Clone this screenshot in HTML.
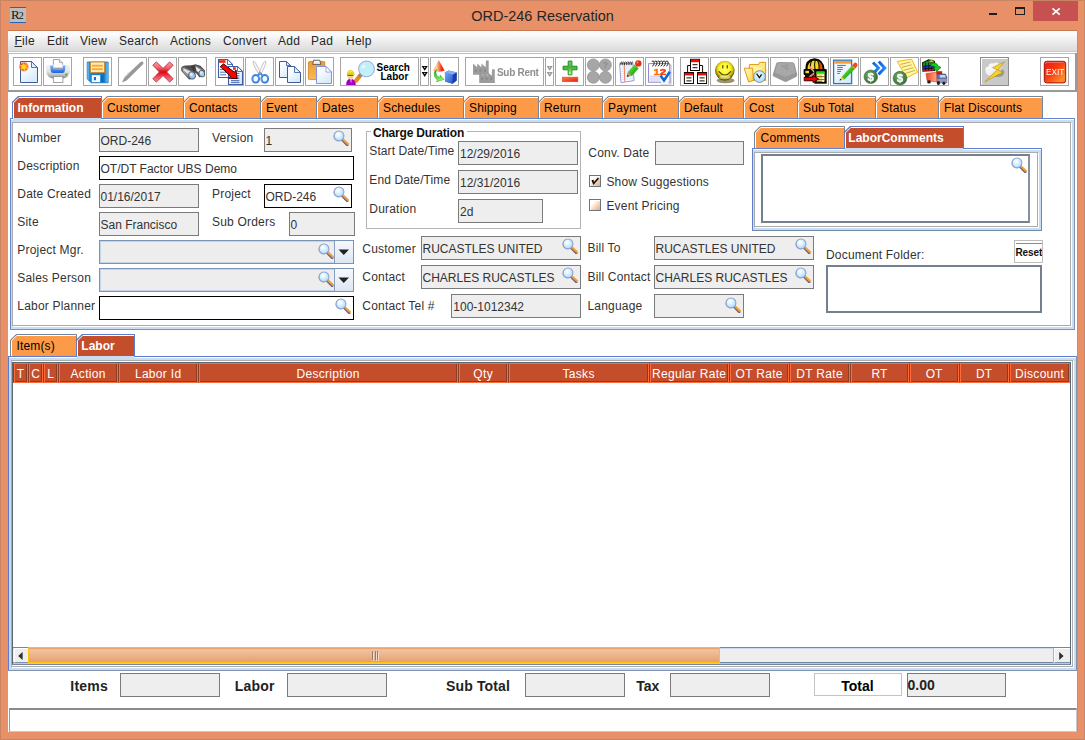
<!DOCTYPE html>
<html><head><meta charset="utf-8"><title>ORD-246 Reservation</title>
<style>
*{box-sizing:border-box;margin:0;padding:0}
html,body{width:1085px;height:740px;overflow:hidden;background:#E89067}
body{position:relative;font-family:"Liberation Sans",sans-serif;font-size:12px;color:#333}
.a{position:absolute;white-space:nowrap}
svg{overflow:visible}
.tb{top:57px;width:29px;height:29px;border:1px solid #A6A6A6;background:#fff}
</style></head><body>
<svg width="0" height="0" style="position:absolute"><defs><symbol id="mag" viewBox="0 0 17 16"><radialGradient id="mg" cx="0.4" cy="0.35" r="0.7"><stop offset="0" stop-color="#fff"/><stop offset="0.35" stop-color="#E4F4FE"/><stop offset="1" stop-color="#A8D8FA"/></radialGradient>
<path d="M9 9.6 L14.2 14.9" stroke="#6A6480" stroke-width="2.6" stroke-linecap="round"/>
<path d="M10.2 9.4 L15 14" stroke="#F4A030" stroke-width="2.1" stroke-linecap="round"/>
<circle cx="5.6" cy="6.4" r="5.1" fill="#4A4A58" opacity="0.45"/>
<circle cx="6" cy="5.9" r="4.9" fill="url(#mg)" stroke="#90A4D4" stroke-width="1.1"/></symbol>
<linearGradient id="gpage" x1="0" y1="0" x2="0.6" y2="1"><stop offset="0" stop-color="#fff"/><stop offset="0.45" stop-color="#F4F9FE"/><stop offset="1" stop-color="#D6EAFA"/></linearGradient>
<radialGradient id="gstar"><stop offset="0" stop-color="#FFE800"/><stop offset="0.35" stop-color="#FFC000"/><stop offset="0.6" stop-color="#F4501C"/><stop offset="1" stop-color="#F4501C" stop-opacity="0"/></radialGradient>
<linearGradient id="gprn" x1="0" y1="0" x2="0" y2="1"><stop offset="0" stop-color="#F2F2F2"/><stop offset="0.45" stop-color="#E6E6E6"/><stop offset="0.8" stop-color="#B4B4B4"/><stop offset="1" stop-color="#7C7C7C"/></linearGradient>
<linearGradient id="gblue" x1="0" y1="0" x2="0" y2="1"><stop offset="0" stop-color="#7CB2F8"/><stop offset="1" stop-color="#1E66E0"/></linearGradient>
<linearGradient id="gflop" x1="0" y1="0" x2="1" y2="0"><stop offset="0" stop-color="#8AD4F8"/><stop offset="0.12" stop-color="#1C88D8"/><stop offset="0.8" stop-color="#0E78CC"/><stop offset="1" stop-color="#7CD4FA"/></linearGradient>
<linearGradient id="gx" x1="0" y1="0" x2="0" y2="1"><stop offset="0" stop-color="#F4A6A8"/><stop offset="0.3" stop-color="#EE6068"/><stop offset="0.5" stop-color="#E00414"/><stop offset="0.7" stop-color="#EA4450"/><stop offset="1" stop-color="#F29498"/></linearGradient>
<linearGradient id="gclip" x1="0" y1="0" x2="0" y2="1"><stop offset="0" stop-color="#F29A28"/><stop offset="1" stop-color="#FBB858"/></linearGradient>
<linearGradient id="gcone" x1="0" y1="0" x2="1" y2="0"><stop offset="0" stop-color="#FFB080"/><stop offset="0.3" stop-color="#FFD0A0"/><stop offset="0.75" stop-color="#F03010"/><stop offset="1" stop-color="#E82000"/></linearGradient>
<linearGradient id="ggreen" x1="0" y1="0" x2="0.4" y2="1"><stop offset="0" stop-color="#18A018"/><stop offset="1" stop-color="#8CF868"/></linearGradient>
<linearGradient id="gcube" x1="0" y1="0" x2="1" y2="1"><stop offset="0" stop-color="#70A8F4"/><stop offset="1" stop-color="#2858C8"/></linearGradient>
<linearGradient id="gplus" x1="0" y1="0" x2="0" y2="1"><stop offset="0" stop-color="#7CCC70"/><stop offset="0.5" stop-color="#48B038"/><stop offset="1" stop-color="#E8FFB0"/></linearGradient>
<linearGradient id="gminus" x1="0" y1="0" x2="1" y2="1"><stop offset="0" stop-color="#FF7848"/><stop offset="1" stop-color="#E82000"/></linearGradient>
<radialGradient id="gsmile" cx="0.5" cy="0.42" r="0.58"><stop offset="0" stop-color="#FFFF60"/><stop offset="0.5" stop-color="#FFF428"/><stop offset="0.66" stop-color="#DCCC1C"/><stop offset="0.82" stop-color="#948410"/><stop offset="1" stop-color="#403400"/></radialGradient>
<linearGradient id="gfold" x1="0" y1="0" x2="1" y2="1"><stop offset="0" stop-color="#FFFBD0"/><stop offset="1" stop-color="#FFD438"/></linearGradient>
<radialGradient id="gclock" cx="0.45" cy="0.4" r="0.6"><stop offset="0" stop-color="#F0FAFF"/><stop offset="1" stop-color="#A8DCF8"/></radialGradient>
<radialGradient id="gcoin" cx="0.4" cy="0.35" r="0.7"><stop offset="0" stop-color="#6CA868"/><stop offset="0.7" stop-color="#487E44"/><stop offset="1" stop-color="#386A38"/></radialGradient>
<linearGradient id="gchev" x1="0" y1="0" x2="1" y2="0"><stop offset="0" stop-color="#0A58D8"/><stop offset="1" stop-color="#2C98FC"/></linearGradient>
<linearGradient id="gexit" x1="0" y1="0" x2="1" y2="1"><stop offset="0" stop-color="#E8181C"/><stop offset="0.45" stop-color="#FA3C0C"/><stop offset="0.85" stop-color="#FF9030"/><stop offset="1" stop-color="#F46020"/></linearGradient>
<linearGradient id="gpen" x1="0" y1="0" x2="1" y2="1"><stop offset="0" stop-color="#A8F088"/><stop offset="0.5" stop-color="#38C020"/><stop offset="1" stop-color="#188010"/></linearGradient>
<linearGradient id="gcargo" x1="0" y1="0" x2="1" y2="0"><stop offset="0" stop-color="#EC4420"/><stop offset="0.55" stop-color="#FF7C58"/><stop offset="1" stop-color="#F8A890"/></linearGradient>
<linearGradient id="gcloud" x1="0" y1="0" x2="1" y2="1"><stop offset="0" stop-color="#fff"/><stop offset="0.55" stop-color="#F0F0F0"/><stop offset="1" stop-color="#8C8C8C"/></linearGradient>
<linearGradient id="gkey" x1="0" y1="0" x2="1" y2="1"><stop offset="0" stop-color="#ABABAB"/><stop offset="1" stop-color="#969696"/></linearGradient>
</defs></svg>
<div class="a" style="left:0px;top:0px;width:1085px;height:740px;background:#E89067;"></div>
<div class="a" style="left:0px;top:0px;width:1085px;height:1px;background:#C98563;"></div>
<div class="a" style="left:0px;top:0px;width:1px;height:740px;background:#C98563;"></div>
<div class="a" style="left:1084px;top:0px;width:1px;height:740px;background:#C98563;"></div>
<div class="a" style="left:0px;top:739px;width:1085px;height:1px;background:#C98563;"></div>
<div class="a" style="left:10px;top:7px;width:16px;height:16px;background:#BDBDBD;border-top:1px solid #2B62B4;border-bottom:1px solid #2B62B4;"></div>
<div class="a" style="left:11px;top:7px;width:16px;font-family:'Liberation Serif',serif;font-size:13px;line-height:15px;color:#111;letter-spacing:-1px">R<span style="font-size:10px">2</span></div>
<div class="a" style="left:0px;top:8.48px;font-size:14.5px;line-height:17px;color:#262626;letter-spacing:0px;width:1085px;text-align:center;">ORD-246 Reservation</div>
<div class="a" style="left:989px;top:13px;width:8px;height:2px;background:#1e1e1e;"></div>
<div class="a" style="left:1015px;top:7px;width:10px;height:8px;border:1px solid #1e1e1e;border-top-width:2px;"></div>
<div class="a" style="left:1033px;top:1px;width:45px;height:20px;background:#C75050;"></div>
<svg class="a" style="left:1051px;top:7px" width="10" height="10" viewBox="0 0 10 10"><path d="M1.5 1.4 L8.7 7.6 M8.7 1.4 L1.5 7.6" stroke="#fff" stroke-width="1.7" fill="none"/></svg>
<div class="a" style="left:8px;top:31px;width:1069px;height:701px;background:#fff;"></div>
<div class="a" style="left:8px;top:30px;width:1069px;height:1px;background:#C9774F;"></div>
<div class="a" style="left:1077px;top:31px;width:1px;height:701px;background:#D08A6A;"></div>
<div class="a" style="left:8px;top:31px;width:1069px;height:20px;background:linear-gradient(#ffffff 0%,#F8F8F8 25%,#E9E9E9 62%,#DCDCDC 100%);"></div>
<div class="a" style="left:8px;top:51px;width:1069px;height:1px;background:#C9C9C9;"></div>
<div class="a" style="left:14.5px;top:33.84px;font-size:12px;line-height:14px;color:#262626;letter-spacing:0.25px;"><span style="text-decoration:underline">F</span>ile</div>
<div class="a" style="left:47px;top:33.84px;font-size:12px;line-height:14px;color:#262626;letter-spacing:0.25px;">Edit</div>
<div class="a" style="left:80px;top:33.84px;font-size:12px;line-height:14px;color:#262626;letter-spacing:0.25px;">View</div>
<div class="a" style="left:119px;top:33.84px;font-size:12px;line-height:14px;color:#262626;letter-spacing:0.25px;">Search</div>
<div class="a" style="left:170px;top:33.84px;font-size:12px;line-height:14px;color:#262626;letter-spacing:0.25px;">Actions</div>
<div class="a" style="left:223px;top:33.84px;font-size:12px;line-height:14px;color:#262626;letter-spacing:0.25px;">Convert</div>
<div class="a" style="left:278px;top:33.84px;font-size:12px;line-height:14px;color:#262626;letter-spacing:0.25px;">Add</div>
<div class="a" style="left:311px;top:33.84px;font-size:12px;line-height:14px;color:#262626;letter-spacing:0.25px;">Pad</div>
<div class="a" style="left:346px;top:33.84px;font-size:12px;line-height:14px;color:#262626;letter-spacing:0.25px;">Help</div>
<div class="a" style="left:8px;top:52px;width:1069px;height:40px;background:#fff;"></div>
<div class="a" style="left:8px;top:53px;width:1068px;height:1px;background:#BDBDBD;"></div>
<div class="a" style="left:8px;top:53px;width:1px;height:38px;background:#b5b5b5;"></div>
<div class="a" style="left:8px;top:90px;width:1069px;height:2px;background:#999;"></div>
<div class="a" style="left:1075px;top:53px;width:2px;height:39px;background:#999;"></div>
<div class="a tb" style="left:13px"></div>
<svg class="a" style="left:13px;top:57px;will-change:transform" width="29" height="29" viewBox="0 0 29 29"><path d="M7.5 4.5 H18.5 L24.5 10.5 V25.5 H7.5 Z" fill="url(#gpage)" stroke="#3F5B9A" stroke-width="1" stroke-linejoin="miter"/><path d="M18.5 4.5 V10.5 H24.5 Z" fill="#9CD0F4" stroke="#3F5B9A" stroke-width="0.8" stroke-linejoin="round"/><path d="M19.1 5.7 V9.9 H22.9 Z" fill="#fff" opacity="0.75"/><circle cx="10.8" cy="9.7" r="5.4" fill="url(#gstar)"/><path d="M10.8 5.2 L11.7 8.4 L14.8 7 L12.9 9.7 L15.6 11.6 L12.2 11.4 L11.6 14.6 L10.2 11.6 L6.8 12.6 L8.9 10 L6.2 8 L9.6 8.2 Z" fill="#FFD820" opacity="0.9"/></svg>
<div class="a tb" style="left:43px"></div>
<svg class="a" style="left:43px;top:57px;will-change:transform" width="29" height="29" viewBox="0 0 29 29"><path d="M10.4 2.5 H16.4 L19.6 5.6 V12 H10.4 Z" fill="#fff" stroke="#9A9A9A" stroke-width="0.9"/><path d="M16.4 2.5 V5.6 H19.6" fill="#E8E8E8" stroke="#9A9A9A" stroke-width="0.7"/><path d="M3.2 9 Q3 8 4.4 8 H25.6 Q27 8 26.8 9 V15 Q26 20.5 19.9 21.6 H10.1 Q4 20.5 3.2 15 Z" fill="url(#gprn)"/><path d="M7.6 8.6 H22.2 Q22.6 8.6 22.4 9.6 L21.8 14 Q21.4 15.9 19.6 15.9 H10 Q8.2 15.9 7.8 14 L7.2 9.6 Q7 8.6 7.6 8.6 Z" fill="url(#gblue)"/><rect x="10.4" y="7.6" width="9.2" height="4.6" fill="#fff"/><rect x="10.4" y="10.6" width="9.2" height="1.6" fill="#8888A0" opacity="0.8"/><rect x="10.3" y="19.4" width="9.6" height="6" fill="#fff" stroke="#8C8C8C" stroke-width="0.8"/><circle cx="23.2" cy="17.6" r="1" fill="#28B028"/></svg>
<div class="a tb" style="left:83px"></div>
<svg class="a" style="left:83px;top:57px;will-change:transform" width="29" height="29" viewBox="0 0 29 29"><path d="M4.2 5 H25.2 V25.8 H8.2 L4.2 22 Z" fill="url(#gflop)" stroke="#0E6CB8" stroke-width="0.7" stroke-linejoin="round"/><rect x="7.4" y="5" width="14.2" height="10.6" fill="#FCE9BC" stroke="#C8852C" stroke-width="0.9"/><rect x="9" y="7.8" width="10.8" height="1.9" fill="#FFA828"/><rect x="9" y="11.2" width="10.8" height="1.9" fill="#FFA828"/><rect x="8.8" y="18.2" width="8.4" height="6.9" fill="#F4FAFF"/><rect x="10.9" y="20" width="2.1" height="3.2" fill="#1C6CD8"/><rect x="18" y="18.2" width="2.2" height="6.9" fill="#0A64B8" opacity="0.7"/></svg>
<div class="a tb" style="left:118px"></div>
<svg class="a" style="left:118px;top:57px;will-change:transform" width="29" height="29" viewBox="0 0 29 29"><path d="M4 25.6 L6.6 20 L22.6 4.9 Q24.2 4 25.2 5.2 Q26 6.6 24.8 7.6 L8.6 23.6 Z" fill="#989898"/><path d="M4.6 24.6 L10 14.4 L12 15.4 L6.4 21.6 Z" fill="#DADADA" opacity="0.55"/></svg>
<div class="a tb" style="left:148px"></div>
<svg class="a" style="left:148px;top:57px;will-change:transform" width="29" height="29" viewBox="0 0 29 29"><path d="M8.3 4.9 L15 11.4 L21.7 4.9 L25.1 8.3 L18.6 15 L25.1 21.7 L21.7 25.1 L15 18.6 L8.3 25.1 L4.9 21.7 L11.4 15 L4.9 8.3 Z" fill="url(#gx)" stroke="#C02838" stroke-width="0.9" stroke-linejoin="round"/></svg>
<div class="a tb" style="left:178px"></div>
<svg class="a" style="left:178px;top:57px;will-change:transform" width="29" height="29" viewBox="0 0 29 29"><path d="M3 11 Q4 8.4 8 8.4 L13.6 8.2 L17.6 7.2 L22.4 8.8 L27 13.6 L26.6 19.4 L21.4 20.2 L17.6 15.4 L16.8 21.6 L11 22.6 L3.4 14 Z" fill="#4E4E4E"/><path d="M3.2 12.4 Q3.4 9.6 6.4 10 L16.6 15.4 L13.2 22 Q9.4 21 7 17.6 Z" fill="#7C7C7C"/><path d="M5.4 11.2 L16 16 L14 20.4 L5.4 13.4 Z" fill="#E2E2E2"/><path d="M5.4 13.6 L13.6 20.6 L12.6 21.6 L4.6 14.6Z" fill="#9A9A9A"/><path d="M15.4 9.6 L18 8.2 L26.4 13.6 L22.4 19 Z" fill="#7C7C7C"/><path d="M17.6 9.6 L25.6 14.4 L23 17.6 L16.4 12 Z" fill="#E6E6E6"/><path d="M12.6 9 L17 8.4 L18.4 13.4 L15.6 14.4 Z" fill="#3C3C3C"/><ellipse cx="14" cy="18.4" rx="3.2" ry="3.8" transform="rotate(-20 14 18.4)" fill="#98C6FA" stroke="#5A5A5A" stroke-width="0.9"/><ellipse cx="23.8" cy="16.6" rx="2.8" ry="3.4" transform="rotate(-20 23.8 16.6)" fill="#A4CEFC" stroke="#5A5A5A" stroke-width="0.9"/><ellipse cx="13.4" cy="17.4" rx="1.3" ry="1.6" fill="#DCEEFF"/><ellipse cx="23.3" cy="15.8" rx="1.1" ry="1.4" fill="#DCEEFF"/></svg>
<div class="a tb" style="left:215px"></div>
<svg class="a" style="left:215px;top:57px;will-change:transform" width="29" height="29" viewBox="0 0 29 29"><path d="M3.5 2.5 H12.5 L17.5 7.5 V20.5 H3.5 Z" fill="#fff" stroke="#3F60A8" stroke-width="1.1" stroke-linejoin="miter"/><path d="M12.5 2.5 V7.5 H17.5 Z" fill="#fff" stroke="#3F60A8" stroke-width="0.8800000000000001" stroke-linejoin="round"/><path d="M13.1 3.7 V6.9 H15.9 Z" fill="#fff" opacity="0.75"/><rect x="4" y="3.2" width="6.6" height="2.6" fill="#FF2000"/><path d="M5 10 H11" stroke="#3F60A8" stroke-width="0.9"/><path d="M5 12.6 H11" stroke="#3F60A8" stroke-width="0.9"/><path d="M5 15.2 H11" stroke="#3F60A8" stroke-width="0.9"/><path d="M5 17.8 H11" stroke="#3F60A8" stroke-width="0.9"/><path d="M13.5 9.5 H22.5 L27.5 14.5 V27.5 H13.5 Z" fill="url(#gpage)" stroke="#3F60A8" stroke-width="1.1" stroke-linejoin="miter"/><path d="M22.5 9.5 V14.5 H27.5 Z" fill="#fff" stroke="#3F60A8" stroke-width="0.8800000000000001" stroke-linejoin="round"/><path d="M23.1 10.7 V13.9 H25.9 Z" fill="#fff" opacity="0.75"/><rect x="18" y="10.2" width="2.8" height="2.6" fill="#FF2000"/><path d="M16 16.4 H24.4" stroke="#3F60A8" stroke-width="0.9"/><path d="M16 18.8 H24.4" stroke="#3F60A8" stroke-width="0.9"/><path d="M16 21.2 H24.4" stroke="#3F60A8" stroke-width="0.9"/><path d="M16 23.6 H24.4" stroke="#3F60A8" stroke-width="0.9"/><path d="M16 25.4 H24.4" stroke="#3F60A8" stroke-width="0.9"/><path d="M5.4 9.6 L8.4 6.8 L19.4 15.2 L21 13 L22.2 21.6 L13.4 21.2 L15.4 19.2 Z" fill="#FF0000" stroke="#200000" stroke-width="0.9" stroke-linejoin="round"/></svg>
<div class="a tb" style="left:245px"></div>
<svg class="a" style="left:245px;top:57px;will-change:transform" width="29" height="29" viewBox="0 0 29 29"><path d="M7.9 4.6 Q9.6 4 10.4 5.6 L16.2 16.8 L14.4 17.8 Q8.6 9.6 7.9 4.6 Z" fill="#F6F6F6" stroke="#ACACAC" stroke-width="0.7"/><path d="M21 4.6 Q19.2 4 18.6 5.6 L13.4 16.8 L15.2 17.8 Q20.4 9.6 21 4.6 Z" fill="#FCFCFC" stroke="#ACACAC" stroke-width="0.7"/><circle cx="15" cy="15.4" r="0.8" fill="#888"/><path d="M12.8 18.8 L14.6 16.4 M17.4 18.8 L15.6 16.4" stroke="#3C84E0" stroke-width="1.8"/><ellipse cx="10.7" cy="21.8" rx="3.3" ry="3.8" fill="none" stroke="#2A78DC" stroke-width="2"/><ellipse cx="19.8" cy="21.8" rx="3.3" ry="3.8" fill="none" stroke="#2A78DC" stroke-width="2"/><ellipse cx="10.4" cy="21.2" rx="3.3" ry="3.8" fill="none" stroke="#8CC0F8" stroke-width="0.6" opacity="0.8"/><ellipse cx="19.5" cy="21.2" rx="3.3" ry="3.8" fill="none" stroke="#8CC0F8" stroke-width="0.6" opacity="0.8"/></svg>
<div class="a tb" style="left:275px"></div>
<svg class="a" style="left:275px;top:57px;will-change:transform" width="29" height="29" viewBox="0 0 29 29"><path d="M4.5 4.5 H11.5 L15.5 8.5 V20.5 H4.5 Z" fill="url(#gpage)" stroke="#3F5B9A" stroke-width="1" stroke-linejoin="miter"/><path d="M11.5 4.5 V8.5 H15.5 Z" fill="#9CD0F4" stroke="#3F5B9A" stroke-width="0.8" stroke-linejoin="round"/><path d="M12.1 5.7 V7.9 H13.9 Z" fill="#fff" opacity="0.75"/><path d="M12.5 9.5 H19.5 L25.5 15.5 V25.5 H12.5 Z" fill="url(#gpage)" stroke="#3F5B9A" stroke-width="1" stroke-linejoin="miter"/><path d="M19.5 9.5 V15.5 H25.5 Z" fill="#9CD0F4" stroke="#3F5B9A" stroke-width="0.8" stroke-linejoin="round"/><path d="M20.1 10.7 V14.9 H23.9 Z" fill="#fff" opacity="0.75"/></svg>
<div class="a tb" style="left:305px"></div>
<svg class="a" style="left:305px;top:57px;will-change:transform" width="29" height="29" viewBox="0 0 29 29"><rect x="3.4" y="4.4" width="16.4" height="18.2" rx="1.2" fill="url(#gclip)" stroke="#C88420" stroke-width="0.8"/><path d="M7.6 7.4 L8.6 3.2 H14.8 L15.8 7.4 Z" fill="#F2F2F2" stroke="#555" stroke-width="0.9" stroke-linejoin="round"/><path d="M11.5 9.5 H21.0 L26.5 15.0 V26.5 H11.5 Z" fill="url(#gpage)" stroke="#8494DC" stroke-width="1" stroke-linejoin="miter"/><path d="M21.0 9.5 V15.0 H26.5 Z" fill="#E8F0FC" stroke="#8494DC" stroke-width="0.8" stroke-linejoin="round"/><path d="M21.6 10.7 V14.4 H24.9 Z" fill="#fff" opacity="0.75"/></svg>
<div class="a tb" style="left:430px"></div>
<svg class="a" style="left:430px;top:57px;will-change:transform" width="29" height="29" viewBox="0 0 29 29"><path d="M8.7 2.9 L14.6 13.6 Q9 16 3 13.6 Z" fill="url(#gcone)"/><path d="M6.4 12.4 Q4.6 19.6 10.4 20.4 L10 18 L13.9 22.4 L6.4 24.8 L7.6 22.8 Q3.6 20.6 4.4 15 Z" fill="url(#ggreen)" stroke="#20A020" stroke-width="0.5"/><path d="M14.9 15.6 L18.6 13.6 L26.7 15.4 L26.6 23.4 L22.6 26.8 L15 24.6 Z" fill="#2C5CCC"/><path d="M14.9 15.6 L22.8 17.8 L22.6 26.8 L15 24.6 Z" fill="url(#gcube)"/><path d="M14.9 15.6 L18.6 13.6 L26.7 15.4 L22.8 17.8 Z" fill="#7CB0F8"/><path d="M22.8 17.8 L26.7 15.4 L26.6 23.4 L22.6 26.8 Z" fill="#1E3CA8"/></svg>
<div class="a tb" style="left:555px"></div>
<svg class="a" style="left:555px;top:57px;will-change:transform" width="29" height="29" viewBox="0 0 29 29"><path d="M13.2 4.1 H16.9 V9.2 H22 V12.8 H16.9 V17.8 H13.2 V12.8 H8.1 V9.2 H13.2 Z" fill="url(#gplus)" stroke="#189418" stroke-width="1" stroke-linejoin="round"/><rect x="7.3" y="20.1" width="15.6" height="4.7" fill="url(#gminus)" stroke="#E84820" stroke-width="0.5"/></svg>
<div class="a tb" style="left:585px"></div>
<svg class="a" style="left:585px;top:57px;will-change:transform" width="29" height="29" viewBox="0 0 29 29"><circle cx="8.3" cy="7.9" r="6" fill="#A6A6A6" stroke="#929292" stroke-width="0.7"/><circle cx="20.4" cy="7.9" r="6" fill="#A6A6A6" stroke="#929292" stroke-width="0.7"/><circle cx="8.3" cy="20.3" r="6" fill="#A6A6A6" stroke="#929292" stroke-width="0.7"/><circle cx="20.4" cy="20.3" r="6" fill="#A6A6A6" stroke="#929292" stroke-width="0.7"/><text x="20.3" y="11" font-family="Liberation Sans,sans-serif" font-size="8.5" font-weight="bold" fill="#8C8C8C" text-anchor="middle">?</text></svg>
<div class="a tb" style="left:615px"></div>
<svg class="a" style="left:615px;top:57px;will-change:transform" width="29" height="29" viewBox="0 0 29 29"><path d="M4.6 6.6 L18 6 L19 23.6 L6 25.6 Z" fill="#fff" stroke="#8C8CD0" stroke-width="0.9" stroke-linejoin="round"/><path d="M6.4 10.4 L18 9.6" stroke="#B8D8F8" stroke-width="0.7"/><path d="M6.4 12.4 L18 11.6" stroke="#B8D8F8" stroke-width="0.7"/><path d="M6.4 14.4 L18 13.6" stroke="#B8D8F8" stroke-width="0.7"/><path d="M6.4 16.4 L18 15.599999999999998" stroke="#B8D8F8" stroke-width="0.7"/><path d="M6.4 18.4 L18 17.599999999999998" stroke="#B8D8F8" stroke-width="0.7"/><path d="M6.4 20.4 L18 19.599999999999998" stroke="#B8D8F8" stroke-width="0.7"/><path d="M6.4 22.4 L18 21.599999999999998" stroke="#B8D8F8" stroke-width="0.7"/><path d="M9.2 7 L9.8 24.8" stroke="#F07050" stroke-width="0.9"/><path d="M6 8.2 Q5.2 4.6 7 4.8" stroke="#222" stroke-width="0.9" fill="none"/><path d="M7.8 8.2 Q7.0 4.6 8.8 4.8" stroke="#222" stroke-width="0.9" fill="none"/><path d="M9.6 8.2 Q8.799999999999999 4.6 10.6 4.8" stroke="#222" stroke-width="0.9" fill="none"/><path d="M11.4 8.2 Q10.6 4.6 12.4 4.8" stroke="#222" stroke-width="0.9" fill="none"/><path d="M13.2 8.2 Q12.399999999999999 4.6 14.2 4.8" stroke="#222" stroke-width="0.9" fill="none"/><path d="M15 8.2 Q14.2 4.6 16 4.8" stroke="#222" stroke-width="0.9" fill="none"/><path d="M16.8 8.2 Q16.0 4.6 17.8 4.8" stroke="#222" stroke-width="0.9" fill="none"/><path d="M12.6 19.2 L12.8 15 L19.6 7.2 L24 11 L17 18.8 Z" fill="url(#gpen)"/><path d="M12 19.8 L12.8 15 L17 18.8 Z" fill="#C89868"/><path d="M11.9 19.9 L12.3 17.6 L14.2 19.2 Z" fill="#333"/><path d="M19.2 7.6 L23.6 11.4 L25 9.8 L20.6 6 Z" fill="#ECECEC"/><circle cx="23.3" cy="6.4" r="3.2" fill="#E43010"/><circle cx="22.4" cy="5.4" r="1.1" fill="#F88068"/></svg>
<div class="a tb" style="left:645px"></div>
<svg class="a" style="left:645px;top:57px;will-change:transform" width="29" height="29" viewBox="0 0 29 29"><rect x="16" y="8" width="10" height="19" fill="#F4F4FA" stroke="#A0A0B8" stroke-width="0.7"/><path d="M3.6 6.6 H24.6 L25 25.2 H3.4 Z" fill="#fff" stroke="#8888CC" stroke-width="1"/><path d="M4 19.4 H16" stroke="#C8C8F0" stroke-width="0.6"/><path d="M4 21.2 H16" stroke="#C8C8F0" stroke-width="0.6"/><path d="M4 23 H16" stroke="#C8C8F0" stroke-width="0.6"/><path d="M6 18.6 V24.6" stroke="#C8C8F0" stroke-width="0.6"/><path d="M8 18.6 V24.6" stroke="#C8C8F0" stroke-width="0.6"/><path d="M10 18.6 V24.6" stroke="#C8C8F0" stroke-width="0.6"/><path d="M12 18.6 V24.6" stroke="#C8C8F0" stroke-width="0.6"/><path d="M14 18.6 V24.6" stroke="#C8C8F0" stroke-width="0.6"/><path d="M7.2 9.2 Q9.6 8.6 9.2 5 Q8.6 3.2 6.8 4.4" stroke="#222" stroke-width="1" fill="none"/><path d="M10 9.2 Q12.4 8.6 12 5 Q11.4 3.2 9.6 4.4" stroke="#222" stroke-width="1" fill="none"/><path d="M12.8 9.2 Q15.200000000000001 8.6 14.8 5 Q14.200000000000001 3.2 12.4 4.4" stroke="#222" stroke-width="1" fill="none"/><path d="M15.6 9.2 Q18.0 8.6 17.6 5 Q17.0 3.2 15.2 4.4" stroke="#222" stroke-width="1" fill="none"/><path d="M18.4 9.2 Q20.799999999999997 8.6 20.4 5 Q19.799999999999997 3.2 18.0 4.4" stroke="#222" stroke-width="1" fill="none"/><path d="M21.2 9.2 Q23.599999999999998 8.6 23.2 5 Q22.599999999999998 3.2 20.8 4.4" stroke="#222" stroke-width="1" fill="none"/><text x="8.6" y="17.9" font-family="Liberation Sans,sans-serif" font-size="9.8" font-weight="bold" fill="#FF7410" stroke="#FF7410" stroke-width="0.5" textLength="6" lengthAdjust="spacingAndGlyphs">1</text><text x="14.8" y="17.9" font-family="Liberation Sans,sans-serif" font-size="9.8" font-weight="bold" fill="#F24010" stroke="#F24010" stroke-width="0.5" textLength="6.4" lengthAdjust="spacingAndGlyphs">2</text><rect x="16" y="18" width="7.6" height="9" fill="#fff" opacity="0.85"/><path d="M15.6 18.6 L19 23.4 L24.8 14.8" fill="none" stroke="#1068D4" stroke-width="2.6"/></svg>
<div class="a tb" style="left:680px"></div>
<svg class="a" style="left:680px;top:57px;will-change:transform" width="29" height="29" viewBox="0 0 29 29"><path d="M10.6 8.5 H7.6 V15.5 M19.4 8.5 H22.6 V15.5" stroke="#180800" stroke-width="1" fill="none"/><rect x="10.5" y="2.3" width="9.0" height="11.2" fill="#fff" stroke="#180800" stroke-width="1"/><rect x="11.0" y="2.8" width="8.0" height="2.4" fill="#FF0000"/><path d="M12.5 7.7 H17.5 M12.5 10.7 H17.5" stroke="#180800" stroke-width="1"/><rect x="4.4" y="15.5" width="9.1" height="11.0" fill="#fff" stroke="#180800" stroke-width="1"/><rect x="4.9" y="16.0" width="8.1" height="2.4" fill="#FF0000"/><path d="M6.4 20.9 H11.5 M6.4 23.9 H11.5" stroke="#180800" stroke-width="1"/><rect x="17.5" y="15.5" width="9.100000000000001" height="11.0" fill="#fff" stroke="#180800" stroke-width="1"/><rect x="18.0" y="16.0" width="8.100000000000001" height="2.4" fill="#FF0000"/><path d="M19.5 20.9 H24.6 M19.5 23.9 H24.6" stroke="#180800" stroke-width="1"/></svg>
<div class="a tb" style="left:710px"></div>
<svg class="a" style="left:710px;top:57px;will-change:transform" width="29" height="29" viewBox="0 0 29 29"><ellipse cx="15.6" cy="23.4" rx="9" ry="2.8" fill="#5C4808" opacity="0.6"/><circle cx="14.8" cy="13.6" r="9.8" fill="url(#gsmile)"/><rect x="12.2" y="8" width="1.2" height="3.6" rx="0.6" fill="#4C4A10"/><rect x="16.7" y="8" width="1.2" height="3.6" rx="0.6" fill="#4C4A10"/><path d="M9 14.7 Q14.8 21.6 20.7 14.7" stroke="#4C3C08" stroke-width="1.2" fill="none" stroke-linecap="round"/><ellipse cx="14.8" cy="20.2" rx="5.4" ry="2" fill="#FFFFB0" opacity="0.55"/></svg>
<div class="a tb" style="left:740px"></div>
<svg class="a" style="left:740px;top:57px;will-change:transform" width="29" height="29" viewBox="0 0 29 29"><path d="M9.4 7.6 H18.8 L19.4 5.4 H25.6 V23.4 H9.4 Z" fill="url(#gfold)" stroke="#E49810" stroke-width="1" stroke-linejoin="round"/><path d="M11 10.4 H21.6 V22 H11 Z" fill="#FFF49C"/><path d="M4.2 11.2 H12.6 L13.4 23.4 L8.6 25 Z" fill="url(#gfold)" stroke="#E49810" stroke-width="1" stroke-linejoin="round"/><circle cx="19.5" cy="19.6" r="5.9" fill="url(#gclock)" stroke="#8A8AA4" stroke-width="1"/><path d="M16.6 16.6 L19.4 20.6 L21.6 17.4" stroke="#111" stroke-width="1.2" fill="none"/></svg>
<div class="a tb" style="left:770px"></div>
<svg class="a" style="left:770px;top:57px;will-change:transform" width="29" height="29" viewBox="0 0 29 29"><path d="M7 5.6 Q8 4.8 9.6 4.9 L22.4 5.2 Q24 5.4 24.6 7 L27.2 17.6 Q27.4 19.2 26 20 L17 24.6 Q15.6 25.2 14.2 24.6 L3.6 19.6 Q2.4 18.8 2.8 17.4 L6 7 Q6.4 6 7 5.6 Z" fill="#989898"/><path d="M8.4 6 L22.4 6.2 Q23.4 6.4 23.8 7.6 L25.2 15 Q25.2 16 24.2 16.4 L16.4 19.4 Q15.6 19.6 14.8 19.4 L5.8 16 Q5 15.4 5.2 14.6 L7.2 7 Q7.6 6 8.4 6 Z" fill="#A8A8A8"/><path d="M11.4 9.4 L17.6 8 L16.8 12.6 M13.4 9.8 L18.6 13.2" stroke="#989898" stroke-width="1.1" fill="none"/></svg>
<div class="a tb" style="left:800px"></div>
<svg class="a" style="left:800px;top:57px;will-change:transform" width="29" height="29" viewBox="0 0 29 29"><path d="M6.4 13 Q6 3 14.6 2.4 Q23 3 23.6 13 Z" fill="#F0DC18" stroke="#080800" stroke-width="2.2"/><path d="M17.6 3.6 Q22.6 6 22.6 12.6 L19 12.6 Q19.4 7 17.6 3.6 Z" fill="#E04C10"/><path d="M12.4 2.8 Q9.4 7 10.6 12.4 M15.4 2.6 Q13.8 7 15 12.4 M17.6 3.4 Q19.6 7 19 12.6" stroke="#181000" stroke-width="1.1" fill="none"/><rect x="3.6" y="12" width="22.8" height="6" rx="1" fill="#080800"/><rect x="5.4" y="13.8" width="3.6" height="2.4" fill="#F0DC18"/><path d="M5 18 L14 17.6 L13 24 L5 23 Z" fill="#181010"/><path d="M9.4 9.4 L15 15.8 L9.4 20" stroke="#F09898" stroke-width="1.7" fill="none"/><path d="M14.6 16.6 L9 20.6" stroke="#D08868" stroke-width="1.6"/><rect x="15.4" y="13.6" width="10.2" height="12" fill="#F0DC70" stroke="#080800" stroke-width="2.2"/><rect x="16.4" y="14.4" width="8.2" height="2.3" fill="#10E010"/><path d="M16.4 19.6 H24.6 M16.4 22.6 H24.6" stroke="#6C5810" stroke-width="0.9"/><rect x="22.2" y="17.6" width="2" height="1.5" fill="#fff"/><rect x="22.2" y="20.5" width="2" height="1.5" fill="#fff"/><rect x="22.2" y="23.4" width="2" height="1.4" fill="#fff"/><path d="M4.2 20.2 H13 V18.4 L18.6 22 L13 25.6 V23.8 H4.2 Z" fill="#F40000" stroke="#200000" stroke-width="0.9"/></svg>
<div class="a tb" style="left:830px"></div>
<svg class="a" style="left:830px;top:57px;will-change:transform" width="29" height="29" viewBox="0 0 29 29"><rect x="3.6" y="3.2" width="18" height="23.4" fill="url(#gpage)" stroke="#2878C8" stroke-width="1.3"/><rect x="4.3" y="3.9" width="16.6" height="2.8" fill="#FF9A30"/><path d="M7.2 8.4 H15.8" stroke="#2C78C8" stroke-width="1"/><path d="M7.2 10.4 H12.8" stroke="#2C78C8" stroke-width="1"/><path d="M7.2 12.4 H12.8" stroke="#2C78C8" stroke-width="1"/><path d="M7.2 14.4 H11" stroke="#2C78C8" stroke-width="1"/><path d="M7.2 16.4 H9.8" stroke="#2C78C8" stroke-width="1"/><path d="M11.6 20 L22 8.4 L25.4 11.6 L14.4 22.6 Z" fill="url(#gpen)"/><path d="M22 8.4 L24.2 6 Q25.6 5 27 6.6 Q28.2 8 27 9.4 L25.4 11.6 Z" fill="#F04828"/><path d="M21.6 8.8 L25 12 " stroke="#E8A030" stroke-width="1"/><path d="M9.6 23.4 L11.6 20 L14.4 22.6 Z" fill="#F0C850"/><path d="M9.4 23.6 L10.4 21.8 L11.6 23 Z" fill="#111"/></svg>
<div class="a tb" style="left:860px"></div>
<svg class="a" style="left:860px;top:57px;will-change:transform" width="29" height="29" viewBox="0 0 29 29"><path d="M12 6.4 L14 4.4 L20.6 11.1 L15.2 16.6 L13.2 14.6 L16.6 11.1 Z" fill="url(#gchev)"/><path d="M17.8 5.6 L19.8 3.6 L26.8 11.1 L19.6 18.4 L17.6 16.2 L22.6 11.1 Z" fill="url(#gchev)"/><circle cx="10.8" cy="19.8" r="6.8" fill="url(#gcoin)" stroke="#3C6C3C" stroke-width="0.6"/><text x="10.8" y="23.8" font-family="Liberation Sans,sans-serif" font-size="11.5" font-weight="bold" fill="#fff" stroke="#fff" stroke-width="0.3" text-anchor="middle">$</text></svg>
<div class="a tb" style="left:890px"></div>
<svg class="a" style="left:890px;top:57px;will-change:transform" width="29" height="29" viewBox="0 0 29 29"><path d="M7.2 4.4 L21.6 2.2 L27.6 15.2 L16.6 20.8 Z" fill="#FFF7A4" stroke="#F4B810" stroke-width="1" stroke-linejoin="round"/><path d="M10.4 7.4 L20.6 5" stroke="#CCB050" stroke-width="1"/><path d="M11.6 10.4 L21.8 7.8" stroke="#CCB050" stroke-width="1"/><path d="M13.6 13.4 L23.6 10.6" stroke="#CCB050" stroke-width="1"/><path d="M15.6 16.4 L25 13.4" stroke="#CCB050" stroke-width="1"/><circle cx="10" cy="21.2" r="6.9" fill="url(#gcoin)" stroke="#3C6C3C" stroke-width="0.6"/><text x="10" y="25.2" font-family="Liberation Sans,sans-serif" font-size="11.5" font-weight="bold" fill="#fff" stroke="#fff" stroke-width="0.3" text-anchor="middle">$</text></svg>
<div class="a tb" style="left:920px"></div>
<svg class="a" style="left:920px;top:57px;will-change:transform" width="29" height="29" viewBox="0 0 29 29"><path d="M2 5.4 L8.6 2.2 L15 4 L15.2 14 L2.4 14.8 Z" fill="#0C140C"/><path d="M3 6 L8.8 3.4 L14.2 5 L14.2 7.8 L3 8.8 Z" fill="#109820"/><path d="M3 9.6 L14.2 8.6 V10.8 L3 11.6 Z" fill="#2030D8"/><path d="M3 12.4 L14.2 11.6 V13.4 L3 14 Z" fill="#D81820"/><path d="M5.6 6 V13.6 M8.6 5.6 V13.4 M11.6 5.6 V13.2" stroke="#0C140C" stroke-width="0.8"/><ellipse cx="11.4" cy="4.3" rx="2.5" ry="1.2" fill="#E8D820" stroke="#282000" stroke-width="0.6"/><path d="M11 6.2 Q17.2 5.2 17.8 8.8 L21 10.4 L17.2 14 L13.6 11.6 L15 10.4 Q14.6 8.6 11 9.2 Z" fill="#10CC20" stroke="#0C700C" stroke-width="0.7"/><path d="M15.9 14.2 H22.2 V17.4 H15.9 Z" fill="#D81408"/><path d="M6 16.4 L16.6 15.2 L17.2 25 L7 23.8 Z" fill="url(#gcargo)" stroke="#C03010" stroke-width="0.5"/><path d="M17 17 H25.4 L26.9 20 V25.8 H17.2 Z" fill="#6870A0" stroke="#404868" stroke-width="0.6"/><path d="M19.8 17.9 H25 L25.8 20.4 H19.8 Z" fill="#B4E0FC"/><path d="M17.4 22 H26.8 V25.6 H17.4Z" fill="#9498B8"/><ellipse cx="9" cy="24.9" rx="1.9" ry="1.7" fill="#202020"/><ellipse cx="18.4" cy="25.9" rx="1.6" ry="2" fill="#202020"/><ellipse cx="23.9" cy="26.3" rx="1.5" ry="1.7" fill="#202020"/></svg>
<div class="a tb" style="left:1040px"></div>
<svg class="a" style="left:1040px;top:57px;will-change:transform" width="29" height="29" viewBox="0 0 29 29"><rect x="4.3" y="4.3" width="21.4" height="21.6" rx="2.4" fill="url(#gexit)" stroke="#A81010" stroke-width="1"/><path d="M5.4 7 Q5.4 5.4 7 5.4 H23" stroke="#F8A8A0" stroke-width="0.8" fill="none" opacity="0.7"/><text x="6" y="18.4" font-family="Liberation Sans,sans-serif" font-size="9.6" fill="#fff" textLength="18.4" lengthAdjust="spacingAndGlyphs">EXIT</text></svg>
<div class="a tb" style="left:980px;background:#C9C9C9;border-color:#8c8c8c"></div>
<svg class="a" style="left:980px;top:57px" width="29" height="29" viewBox="0 0 29 29"><path d="M1.5 27.5 V1.5 H27.5" stroke="#fff" stroke-width="1" fill="none"/><path d="M19 13 Q24.6 11 24.2 15.4 Q23.6 20.4 17 20 Q13 20.4 12 18 Z" fill="#9A9A9A"/><path d="M5.6 14 Q4.6 10 8.4 9.6 Q9 5.6 13.4 6.4 Q17 4 19.4 7.6 Q23 8.6 21.6 12.6 Q22.6 17 17.6 17.6 Q14.6 20.6 11 18.6 Q6.4 19 5.6 14 Z" fill="url(#gcloud)"/><path d="M24.6 4.8 L12.6 10.6 L17.4 12.8 L4.8 24.8 L22.8 15.2 L17.8 13 Z" fill="#F8D424" stroke="#B08C10" stroke-width="0.6" stroke-linejoin="round"/></svg>
<div class="a tb" style="left:340px;width:79px"></div>
<svg class="a" style="left:340px;top:57px" width="79" height="29" viewBox="0 0 79 29"><path d="M20.4 18.4 L16 23.6" stroke="#F08818" stroke-width="4.2" stroke-linecap="round"/><path d="M20.6 17.6 L19 19.6" stroke="#8A8A96" stroke-width="3.4"/><circle cx="26.5" cy="11.9" r="7.9" fill="#C2F0FA" stroke="#8C8CDC" stroke-width="0.8"/><ellipse cx="23.6" cy="9.6" rx="2.2" ry="1.4" fill="#fff" opacity="0.6" transform="rotate(-35 23.6 9.6)"/><path d="M6.2 28 Q6 22.4 10.6 21.6 Q15.6 22.4 15.8 28 Z" fill="#A200C2"/><path d="M10.2 22 L11.2 26.4 L12.2 22 Z" fill="#fff"/><path d="M10.9 22.4 L11.2 27 L11.6 22.4Z" fill="#222"/><ellipse cx="10.4" cy="19.6" rx="3" ry="2.6" fill="#F6CCA4"/><path d="M6.8 17.6 Q7 13 10.4 13 Q14 13 14.4 17 L15.2 17.8 L6.8 18.2 Z" fill="#E6D018"/><path d="M8 15.4 Q10 13.6 12.6 15" stroke="#FFF470" stroke-width="0.8" fill="none"/><path d="M7.4 18.4 H13.4" stroke="#403018" stroke-width="0.8"/></svg>
<div class="a" style="left:376.5px;top:61.53px;font-size:10px;line-height:12px;color:#000;letter-spacing:0px;font-weight:bold;">Search</div>
<div class="a" style="left:380.5px;top:70.53px;font-size:10px;line-height:12px;color:#000;letter-spacing:0px;font-weight:bold;">Labor</div>
<div class="a tb" style="left:420px;width:9px"></div>
<svg class="a" style="left:420px;top:57px" width="9" height="29" viewBox="0 0 9 29"><path d="M1.6 9 H7.8 L4.7 13.8 Z M1.6 15 H7.8 L4.7 19.9 Z" fill="#0a0a0a"/><circle cx="4.7" cy="10.4" r="0.55" fill="#eee"/><circle cx="4.7" cy="16.4" r="0.55" fill="#eee"/></svg>
<div class="a tb" style="left:465px;width:79px"></div>
<svg class="a" style="left:465px;top:57px" width="79" height="29" viewBox="0 0 79 29"><path d="M8 17.8 V6.600000000000001 L12.2 10.200000000000001 V6.600000000000001 L16.4 10.200000000000001 V6.600000000000001 L20.6 10.200000000000001 L20.999999999999996 3.6000000000000014 H23.7 V17.8 Z" fill="#9C9C9C"/><rect x="9.8" y="12.600000000000001" width="2" height="2" fill="#888"/><rect x="14.4" y="12.600000000000001" width="2" height="2" fill="#888"/><rect x="19.0" y="12.600000000000001" width="2" height="2" fill="#888"/><path d="M14.2 25.9 V15.1 L18.366666666666667 18.7 V15.1 L22.53333333333333 18.7 V15.1 L26.7 18.7 L27.099999999999994 12.299999999999999 H29.799999999999997 V25.9 Z" fill="#9C9C9C"/><rect x="16.0" y="20.7" width="2" height="2" fill="#888"/><rect x="20.6" y="20.7" width="2" height="2" fill="#888"/><rect x="25.2" y="20.7" width="2" height="2" fill="#888"/></svg>
<div class="a" style="left:496.8px;top:66.53px;font-size:10px;line-height:12px;color:#8E8E8E;letter-spacing:-0.3px;font-weight:bold;will-change:transform;">Sub Rent</div>
<div class="a tb" style="left:545px;width:9px"></div>
<svg class="a" style="left:545px;top:57px" width="9" height="29" viewBox="0 0 9 29"><path d="M1.6 9 H7.8 L4.7 13.8 Z M1.6 15 H7.8 L4.7 19.9 Z" fill="#9a9a9a"/><circle cx="4.7" cy="10.4" r="0.55" fill="#eee"/><circle cx="4.7" cy="16.4" r="0.55" fill="#eee"/></svg>
<div class="a" style="left:10px;top:118px;width:1065px;height:212px;background:#C9DCF2;"></div>
<div class="a" style="left:10px;top:118px;width:1065px;height:1px;background:#6284D2;"></div>
<div class="a" style="left:10px;top:118px;width:1px;height:212px;background:#6284D2;"></div>
<div class="a" style="left:10px;top:329px;width:1065px;height:1px;background:#7F93AE;"></div>
<div class="a" style="left:1074px;top:118px;width:1px;height:212px;background:#7F93AE;"></div>
<div class="a" style="left:11px;top:119px;width:1063px;height:1px;background:#fff;"></div>
<div class="a" style="left:12px;top:122px;width:1059px;height:204px;background:#fff;border:1px solid #ABABAB;box-shadow:1px 1px 0 #fff;"></div>
<svg class="a" style="left:12px;top:96px" width="90" height="22" viewBox="0 0 90 22"><path d="M0 22 V6 L6 0 H90 V22 Z" fill="#C44D2C"/><path d="M1.5 22 V6.8 L6.8 1.5 H89" fill="none" stroke="#fff" stroke-width="1"/><path d="M0.5 22 V6.4 L6.4 0.5 H89.5 V22" fill="none" stroke="#5B7DD2" stroke-width="1"/></svg>
<div class="a" style="left:17.5px;top:100.84px;font-size:12px;line-height:14px;color:#fff;letter-spacing:0px;font-weight:bold;">Information</div>
<svg class="a" style="left:101px;top:96px" width="83" height="22" viewBox="0 0 83 22"><path d="M0 22 V6 L6 0 H83 V22 Z" fill="#FD9A47"/><path d="M1.5 22 V6.8 L6.8 1.5 H82" fill="none" stroke="#fff" stroke-width="1"/><path d="M0.5 22 V6.4 L6.4 0.5 H82.5 V22" fill="none" stroke="#6F869F" stroke-width="1"/></svg>
<div class="a" style="left:107px;top:100.84px;font-size:12px;line-height:14px;color:#000;letter-spacing:0.15px;">Customer</div>
<svg class="a" style="left:183px;top:96px" width="78" height="22" viewBox="0 0 78 22"><path d="M0 22 V6 L6 0 H78 V22 Z" fill="#FD9A47"/><path d="M1.5 22 V6.8 L6.8 1.5 H77" fill="none" stroke="#fff" stroke-width="1"/><path d="M0.5 22 V6.4 L6.4 0.5 H77.5 V22" fill="none" stroke="#6F869F" stroke-width="1"/></svg>
<div class="a" style="left:189px;top:100.84px;font-size:12px;line-height:14px;color:#000;letter-spacing:0.15px;">Contacts</div>
<svg class="a" style="left:260px;top:96px" width="57" height="22" viewBox="0 0 57 22"><path d="M0 22 V6 L6 0 H57 V22 Z" fill="#FD9A47"/><path d="M1.5 22 V6.8 L6.8 1.5 H56" fill="none" stroke="#fff" stroke-width="1"/><path d="M0.5 22 V6.4 L6.4 0.5 H56.5 V22" fill="none" stroke="#6F869F" stroke-width="1"/></svg>
<div class="a" style="left:266px;top:100.84px;font-size:12px;line-height:14px;color:#000;letter-spacing:0.15px;">Event</div>
<svg class="a" style="left:316px;top:96px" width="62" height="22" viewBox="0 0 62 22"><path d="M0 22 V6 L6 0 H62 V22 Z" fill="#FD9A47"/><path d="M1.5 22 V6.8 L6.8 1.5 H61" fill="none" stroke="#fff" stroke-width="1"/><path d="M0.5 22 V6.4 L6.4 0.5 H61.5 V22" fill="none" stroke="#6F869F" stroke-width="1"/></svg>
<div class="a" style="left:322px;top:100.84px;font-size:12px;line-height:14px;color:#000;letter-spacing:0.15px;">Dates</div>
<svg class="a" style="left:377px;top:96px" width="87" height="22" viewBox="0 0 87 22"><path d="M0 22 V6 L6 0 H87 V22 Z" fill="#FD9A47"/><path d="M1.5 22 V6.8 L6.8 1.5 H86" fill="none" stroke="#fff" stroke-width="1"/><path d="M0.5 22 V6.4 L6.4 0.5 H86.5 V22" fill="none" stroke="#6F869F" stroke-width="1"/></svg>
<div class="a" style="left:383px;top:100.84px;font-size:12px;line-height:14px;color:#000;letter-spacing:0.15px;">Schedules</div>
<svg class="a" style="left:463px;top:96px" width="76" height="22" viewBox="0 0 76 22"><path d="M0 22 V6 L6 0 H76 V22 Z" fill="#FD9A47"/><path d="M1.5 22 V6.8 L6.8 1.5 H75" fill="none" stroke="#fff" stroke-width="1"/><path d="M0.5 22 V6.4 L6.4 0.5 H75.5 V22" fill="none" stroke="#6F869F" stroke-width="1"/></svg>
<div class="a" style="left:469px;top:100.84px;font-size:12px;line-height:14px;color:#000;letter-spacing:0.15px;">Shipping</div>
<svg class="a" style="left:538px;top:96px" width="65" height="22" viewBox="0 0 65 22"><path d="M0 22 V6 L6 0 H65 V22 Z" fill="#FD9A47"/><path d="M1.5 22 V6.8 L6.8 1.5 H64" fill="none" stroke="#fff" stroke-width="1"/><path d="M0.5 22 V6.4 L6.4 0.5 H64.5 V22" fill="none" stroke="#6F869F" stroke-width="1"/></svg>
<div class="a" style="left:544px;top:100.84px;font-size:12px;line-height:14px;color:#000;letter-spacing:0.15px;">Return</div>
<svg class="a" style="left:602px;top:96px" width="77" height="22" viewBox="0 0 77 22"><path d="M0 22 V6 L6 0 H77 V22 Z" fill="#FD9A47"/><path d="M1.5 22 V6.8 L6.8 1.5 H76" fill="none" stroke="#fff" stroke-width="1"/><path d="M0.5 22 V6.4 L6.4 0.5 H76.5 V22" fill="none" stroke="#6F869F" stroke-width="1"/></svg>
<div class="a" style="left:608px;top:100.84px;font-size:12px;line-height:14px;color:#000;letter-spacing:0.15px;">Payment</div>
<svg class="a" style="left:678px;top:96px" width="66" height="22" viewBox="0 0 66 22"><path d="M0 22 V6 L6 0 H66 V22 Z" fill="#FD9A47"/><path d="M1.5 22 V6.8 L6.8 1.5 H65" fill="none" stroke="#fff" stroke-width="1"/><path d="M0.5 22 V6.4 L6.4 0.5 H65.5 V22" fill="none" stroke="#6F869F" stroke-width="1"/></svg>
<div class="a" style="left:684px;top:100.84px;font-size:12px;line-height:14px;color:#000;letter-spacing:0.15px;">Default</div>
<svg class="a" style="left:743px;top:96px" width="55" height="22" viewBox="0 0 55 22"><path d="M0 22 V6 L6 0 H55 V22 Z" fill="#FD9A47"/><path d="M1.5 22 V6.8 L6.8 1.5 H54" fill="none" stroke="#fff" stroke-width="1"/><path d="M0.5 22 V6.4 L6.4 0.5 H54.5 V22" fill="none" stroke="#6F869F" stroke-width="1"/></svg>
<div class="a" style="left:749px;top:100.84px;font-size:12px;line-height:14px;color:#000;letter-spacing:0.15px;">Cost</div>
<svg class="a" style="left:797px;top:96px" width="79" height="22" viewBox="0 0 79 22"><path d="M0 22 V6 L6 0 H79 V22 Z" fill="#FD9A47"/><path d="M1.5 22 V6.8 L6.8 1.5 H78" fill="none" stroke="#fff" stroke-width="1"/><path d="M0.5 22 V6.4 L6.4 0.5 H78.5 V22" fill="none" stroke="#6F869F" stroke-width="1"/></svg>
<div class="a" style="left:803px;top:100.84px;font-size:12px;line-height:14px;color:#000;letter-spacing:0.15px;">Sub Total</div>
<svg class="a" style="left:875px;top:96px" width="64" height="22" viewBox="0 0 64 22"><path d="M0 22 V6 L6 0 H64 V22 Z" fill="#FD9A47"/><path d="M1.5 22 V6.8 L6.8 1.5 H63" fill="none" stroke="#fff" stroke-width="1"/><path d="M0.5 22 V6.4 L6.4 0.5 H63.5 V22" fill="none" stroke="#6F869F" stroke-width="1"/></svg>
<div class="a" style="left:881px;top:100.84px;font-size:12px;line-height:14px;color:#000;letter-spacing:0.15px;">Status</div>
<svg class="a" style="left:938px;top:96px" width="105" height="22" viewBox="0 0 105 22"><path d="M0 22 V6 L6 0 H105 V22 Z" fill="#FD9A47"/><path d="M1.5 22 V6.8 L6.8 1.5 H104" fill="none" stroke="#fff" stroke-width="1"/><path d="M0.5 22 V6.4 L6.4 0.5 H104.5 V22" fill="none" stroke="#6F869F" stroke-width="1"/></svg>
<div class="a" style="left:944px;top:100.84px;font-size:12px;line-height:14px;color:#000;letter-spacing:0.15px;">Flat Discounts</div>
<div class="a" style="left:13px;top:118px;width:88px;height:2px;background:#C9DCF2;"></div>
<div class="a" style="left:17.3px;top:130.84px;font-size:12px;line-height:14px;color:#333;letter-spacing:0.2px;">Number</div>
<div class="a" style="left:17.3px;top:158.84px;font-size:12px;line-height:14px;color:#333;letter-spacing:0.2px;">Description</div>
<div class="a" style="left:17.3px;top:186.84px;font-size:12px;line-height:14px;color:#333;letter-spacing:0.2px;">Date Created</div>
<div class="a" style="left:17.3px;top:214.84px;font-size:12px;line-height:14px;color:#333;letter-spacing:0.2px;">Site</div>
<div class="a" style="left:17.3px;top:242.84px;font-size:12px;line-height:14px;color:#333;letter-spacing:0.2px;">Project Mgr.</div>
<div class="a" style="left:17.3px;top:270.84px;font-size:12px;line-height:14px;color:#333;letter-spacing:0.2px;">Sales Person</div>
<div class="a" style="left:17.3px;top:298.84px;font-size:12px;line-height:14px;color:#333;letter-spacing:0.2px;">Labor Planner</div>
<div class="a" style="left:99px;top:128px;width:100px;height:24px;background:#EEEEEE;border:1px solid #7b7b7b;"></div>
<div class="a" style="left:100.5px;top:133.84px;font-size:12px;line-height:14px;color:#333;letter-spacing:0px;">ORD-246</div>
<div class="a" style="left:212px;top:130.84px;font-size:12px;line-height:14px;color:#333;letter-spacing:0.2px;">Version</div>
<div class="a" style="left:264px;top:128px;width:88px;height:24px;background:#EEEEEE;border:1px solid #7b7b7b;"></div>
<div class="a" style="left:265.5px;top:133.84px;font-size:12px;line-height:14px;color:#333;letter-spacing:0px;">1</div>
<svg class="a" style="left:333px;top:129.5px" width="17" height="16" viewBox="0 0 17 16"><use href="#mag"/></svg>
<div class="a" style="left:99px;top:156px;width:255px;height:24px;background:#fff;border:1px solid #000;"></div>
<div class="a" style="left:100.5px;top:161.84px;font-size:12px;line-height:14px;color:#333;letter-spacing:0px;">OT/DT Factor UBS Demo</div>
<div class="a" style="left:99px;top:184px;width:100px;height:24px;background:#EEEEEE;border:1px solid #7b7b7b;"></div>
<div class="a" style="left:100.5px;top:189.84px;font-size:12px;line-height:14px;color:#333;letter-spacing:0px;">01/16/2017</div>
<div class="a" style="left:212px;top:186.84px;font-size:12px;line-height:14px;color:#333;letter-spacing:0.2px;">Project</div>
<div class="a" style="left:264px;top:184px;width:88px;height:24px;background:#fff;border:1px solid #000;"></div>
<div class="a" style="left:265.5px;top:189.84px;font-size:12px;line-height:14px;color:#333;letter-spacing:0px;">ORD-246</div>
<svg class="a" style="left:333px;top:185.5px" width="17" height="16" viewBox="0 0 17 16"><use href="#mag"/></svg>
<div class="a" style="left:99px;top:212px;width:100px;height:24px;background:#EEEEEE;border:1px solid #7b7b7b;"></div>
<div class="a" style="left:100.5px;top:217.84px;font-size:12px;line-height:14px;color:#333;letter-spacing:0px;">San Francisco</div>
<div class="a" style="left:212px;top:214.84px;font-size:12px;line-height:14px;color:#333;letter-spacing:0.2px;">Sub Orders</div>
<div class="a" style="left:289px;top:212px;width:65.5px;height:24px;background:#EEEEEE;border:1px solid #7b7b7b;"></div>
<div class="a" style="left:290.5px;top:217.84px;font-size:12px;line-height:14px;color:#333;letter-spacing:0px;">0</div>
<div class="a" style="left:99px;top:240px;width:255px;height:24px;background:#EDEDED;border:1px solid #7A93B6;box-shadow:inset 0 0 0 1px #C5D6EA;"></div>
<div class="a" style="left:334px;top:241px;width:19px;height:22px;background:linear-gradient(#F6F9FD,#DCE6F3);border-left:1px solid #869EC0;"></div>
<svg class="a" style="left:338px;top:249px" width="12" height="7" viewBox="0 0 12 7"><path d="M0.5 0.5 H11 L5.75 6 Z" fill="#222"/></svg>
<svg class="a" style="left:317.5px;top:242.5px" width="17" height="16" viewBox="0 0 17 16"><use href="#mag"/></svg>
<div class="a" style="left:99px;top:268px;width:255px;height:24px;background:#EDEDED;border:1px solid #7A93B6;box-shadow:inset 0 0 0 1px #C5D6EA;"></div>
<div class="a" style="left:334px;top:269px;width:19px;height:22px;background:linear-gradient(#F6F9FD,#DCE6F3);border-left:1px solid #869EC0;"></div>
<svg class="a" style="left:338px;top:277px" width="12" height="7" viewBox="0 0 12 7"><path d="M0.5 0.5 H11 L5.75 6 Z" fill="#222"/></svg>
<svg class="a" style="left:317.5px;top:270.5px" width="17" height="16" viewBox="0 0 17 16"><use href="#mag"/></svg>
<div class="a" style="left:99px;top:296px;width:255px;height:24px;background:#fff;border:1px solid #000;"></div>
<svg class="a" style="left:335px;top:298px" width="17" height="16" viewBox="0 0 17 16"><use href="#mag"/></svg>
<div class="a" style="left:366px;top:131px;width:215px;height:98px;border:1px solid #B4B4B4;"></div>
<div class="a" style="left:371px;top:126px;width:96px;height:12px;background:#fff;"></div>
<div class="a" style="left:373px;top:125.84px;font-size:12px;line-height:14px;color:#111;letter-spacing:-0.2px;font-weight:bold;">Charge Duration</div>
<div class="a" style="left:369.3px;top:143.84px;font-size:12px;line-height:14px;color:#333;letter-spacing:0.1px;">Start Date/Time</div>
<div class="a" style="left:369.3px;top:172.84px;font-size:12px;line-height:14px;color:#333;letter-spacing:0.1px;">End Date/Time</div>
<div class="a" style="left:369.3px;top:201.84px;font-size:12px;line-height:14px;color:#333;letter-spacing:0.2px;">Duration</div>
<div class="a" style="left:458px;top:141px;width:120px;height:24px;background:#EEEEEE;border:1px solid #7b7b7b;"></div>
<div class="a" style="left:460px;top:146.84px;font-size:12px;line-height:14px;color:#333;letter-spacing:0px;">12/29/2016</div>
<div class="a" style="left:458px;top:170px;width:120px;height:24px;background:#EEEEEE;border:1px solid #7b7b7b;"></div>
<div class="a" style="left:460px;top:175.84px;font-size:12px;line-height:14px;color:#333;letter-spacing:0px;">12/31/2016</div>
<div class="a" style="left:458px;top:199px;width:85px;height:24px;background:#EEEEEE;border:1px solid #7b7b7b;"></div>
<div class="a" style="left:460px;top:204.84px;font-size:12px;line-height:14px;color:#333;letter-spacing:0px;">2d</div>
<div class="a" style="left:588.3px;top:145.84px;font-size:12px;line-height:14px;color:#333;letter-spacing:0.2px;">Conv. Date</div>
<div class="a" style="left:655px;top:141px;width:89px;height:24px;background:#EEEEEE;border:1px solid #7b7b7b;"></div>
<div class="a" style="left:589px;top:175px;width:12px;height:12px;border:1px solid #62778A;background:linear-gradient(135deg,#ffffff 28%,#FBD3B5 62%,#F6A76F 100%);box-shadow:inset 1px 1px 0 #fff;"></div>
<svg class="a" style="left:589px;top:175px" width="12" height="12" viewBox="0 0 12 12"><path d="M2.4 5.3 L4.6 4.8 L5 7 L8.9 2.6 L10 3.8 L4.4 10 Z" fill="#111"/></svg>
<div class="a" style="left:606.4px;top:174.84px;font-size:12px;line-height:14px;color:#333;letter-spacing:0.2px;">Show Suggestions</div>
<div class="a" style="left:589px;top:199px;width:12px;height:12px;border:1px solid #62778A;background:linear-gradient(135deg,#ffffff 28%,#FBD3B5 62%,#F6A76F 100%);box-shadow:inset 1px 1px 0 #fff;"></div>
<div class="a" style="left:606.4px;top:198.84px;font-size:12px;line-height:14px;color:#333;letter-spacing:0.2px;">Event Pricing</div>
<div class="a" style="left:362.3px;top:241.84px;font-size:12px;line-height:14px;color:#333;letter-spacing:0.2px;">Customer</div>
<div class="a" style="left:421px;top:236px;width:160px;height:24px;background:#EEEEEE;border:1px solid #7b7b7b;"></div>
<div class="a" style="left:422.5px;top:241.84px;font-size:12px;line-height:14px;color:#333;letter-spacing:0px;">RUCASTLES UNITED</div>
<svg class="a" style="left:561.5px;top:238px" width="17" height="16" viewBox="0 0 17 16"><use href="#mag"/></svg>
<div class="a" style="left:362.3px;top:269.84px;font-size:12px;line-height:14px;color:#333;letter-spacing:0.2px;">Contact</div>
<div class="a" style="left:421px;top:265px;width:160px;height:24px;background:#EEEEEE;border:1px solid #7b7b7b;"></div>
<div class="a" style="left:422.5px;top:270.84px;font-size:12px;line-height:14px;color:#333;letter-spacing:0px;">CHARLES RUCASTLES</div>
<svg class="a" style="left:561.5px;top:267px" width="17" height="16" viewBox="0 0 17 16"><use href="#mag"/></svg>
<div class="a" style="left:362.3px;top:298.84px;font-size:12px;line-height:14px;color:#333;letter-spacing:0.2px;">Contact Tel #</div>
<div class="a" style="left:451px;top:294px;width:129.5px;height:24px;background:#EEEEEE;border:1px solid #7b7b7b;"></div>
<div class="a" style="left:453.3px;top:299.84px;font-size:12px;line-height:14px;color:#333;letter-spacing:0px;">100-1012342</div>
<div class="a" style="left:587.5px;top:240.84px;font-size:12px;line-height:14px;color:#333;letter-spacing:0.2px;">Bill To</div>
<div class="a" style="left:654px;top:236px;width:160px;height:24px;background:#EEEEEE;border:1px solid #7b7b7b;"></div>
<div class="a" style="left:655.5px;top:241.84px;font-size:12px;line-height:14px;color:#333;letter-spacing:0px;">RUCASTLES UNITED</div>
<svg class="a" style="left:794.5px;top:238px" width="17" height="16" viewBox="0 0 17 16"><use href="#mag"/></svg>
<div class="a" style="left:587.5px;top:269.84px;font-size:12px;line-height:14px;color:#333;letter-spacing:0.2px;">Bill Contact</div>
<div class="a" style="left:654px;top:265px;width:160px;height:24px;background:#EEEEEE;border:1px solid #7b7b7b;"></div>
<div class="a" style="left:655.5px;top:270.84px;font-size:12px;line-height:14px;color:#333;letter-spacing:0px;">CHARLES RUCASTLES</div>
<svg class="a" style="left:794.5px;top:267px" width="17" height="16" viewBox="0 0 17 16"><use href="#mag"/></svg>
<div class="a" style="left:587.5px;top:298.84px;font-size:12px;line-height:14px;color:#333;letter-spacing:0.2px;">Language</div>
<div class="a" style="left:654px;top:294px;width:90px;height:24px;background:#EEEEEE;border:1px solid #7b7b7b;"></div>
<svg class="a" style="left:724.5px;top:297px" width="17" height="16" viewBox="0 0 17 16"><use href="#mag"/></svg>
<div class="a" style="left:752px;top:148px;width:290px;height:83px;background:#C9DCF2;"></div>
<div class="a" style="left:752px;top:148px;width:290px;height:1px;background:#5F80D2;"></div>
<div class="a" style="left:752px;top:148px;width:1px;height:83px;background:#5F80D2;"></div>
<div class="a" style="left:752px;top:230px;width:290px;height:1px;background:#6F8BAB;"></div>
<div class="a" style="left:1041px;top:148px;width:1px;height:83px;background:#6F8BAB;"></div>
<div class="a" style="left:753px;top:149px;width:287.5px;height:1px;background:#fff;"></div>
<div class="a" style="left:754px;top:152px;width:284px;height:75px;background:#fff;border:1px solid #ABABAB;box-shadow:1px 1px 0 #fff;"></div>
<svg class="a" style="left:754px;top:126px" width="91" height="22" viewBox="0 0 91 22"><path d="M0 22 V6 L6 0 H91 V22 Z" fill="#FD9A47"/><path d="M1.5 22 V6.8 L6.8 1.5 H90" fill="none" stroke="#fff" stroke-width="1"/><path d="M0.5 22 V6.4 L6.4 0.5 H90.5 V22" fill="none" stroke="#6F869F" stroke-width="1"/></svg>
<div class="a" style="left:760.6px;top:130.84px;font-size:12px;line-height:14px;color:#000;letter-spacing:0.15px;">Comments</div>
<svg class="a" style="left:844px;top:126px" width="120" height="22" viewBox="0 0 120 22"><path d="M0 22 V6 L6 0 H120 V22 Z" fill="#C44D2C"/><path d="M1.5 22 V6.8 L6.8 1.5 H119" fill="none" stroke="#fff" stroke-width="1"/><path d="M0.5 22 V6.4 L6.4 0.5 H119.5 V22" fill="none" stroke="#5B7DD2" stroke-width="1"/></svg>
<div class="a" style="left:848.3px;top:130.84px;font-size:12px;line-height:14px;color:#fff;letter-spacing:0px;font-weight:bold;">LaborComments</div>
<div class="a" style="left:845px;top:148px;width:118px;height:2px;background:#C9DCF2;"></div>
<div class="a" style="left:761px;top:154px;width:269px;height:69px;background:#fff;border:2px solid #74808E;border-right-color:#8692A0;"></div>
<svg class="a" style="left:1010.5px;top:157px" width="17" height="16" viewBox="0 0 17 16"><use href="#mag"/></svg>
<div class="a" style="left:826px;top:247.84px;font-size:12px;line-height:14px;color:#333;letter-spacing:0.2px;">Document Folder:</div>
<div class="a" style="left:1014px;top:240px;width:29px;height:22.5px;background:#fff;border:1px solid #BDBDBD;overflow:hidden;"><div style="position:absolute;left:1px;top:1.5px;width:26px;height:1px;background:#8c8c8c"></div><div style="position:absolute;left:0.5px;top:6px;font-size:10px;line-height:12px;font-weight:bold;color:#111;letter-spacing:-0.1px">Reset</div></div>
<div class="a" style="left:826px;top:264.5px;width:216px;height:48px;background:#fff;border:2px solid #74808E;"></div>
<div class="a" style="left:8px;top:356px;width:1069px;height:315px;background:#C9DCF2;"></div>
<div class="a" style="left:8px;top:356px;width:1069px;height:1px;background:#5A7BD0;"></div>
<div class="a" style="left:8px;top:356px;width:1px;height:315px;background:#5A7BD0;"></div>
<div class="a" style="left:8px;top:670px;width:1069px;height:1px;background:#7F93AE;"></div>
<div class="a" style="left:1076px;top:356px;width:1px;height:315px;background:#7F93AE;"></div>
<div class="a" style="left:9px;top:357px;width:1067px;height:1px;background:#fff;"></div>
<div class="a" style="left:11px;top:360px;width:1062px;height:307px;background:#fff;border:1px solid #ABABAB;box-shadow:1px 1px 0 #fff;"></div>
<div class="a" style="left:12px;top:362px;width:1059px;height:303px;background:#fff;border:1px solid #5E6672;border-bottom-color:#8F9BB0;"></div>
<svg class="a" style="left:10px;top:334px" width="67" height="22" viewBox="0 0 67 22"><path d="M0 22 V6 L6 0 H67 V22 Z" fill="#FD9A47"/><path d="M1.5 22 V6.8 L6.8 1.5 H66" fill="none" stroke="#fff" stroke-width="1"/><path d="M0.5 22 V6.4 L6.4 0.5 H66.5 V22" fill="none" stroke="#6F869F" stroke-width="1"/></svg>
<div class="a" style="left:16.5px;top:338.84px;font-size:12px;line-height:14px;color:#000;letter-spacing:0.15px;">Item(s)</div>
<svg class="a" style="left:76px;top:334px" width="59" height="22" viewBox="0 0 59 22"><path d="M0 22 V6 L6 0 H59 V22 Z" fill="#C44D2C"/><path d="M1.5 22 V6.8 L6.8 1.5 H58" fill="none" stroke="#fff" stroke-width="1"/><path d="M0.5 22 V6.4 L6.4 0.5 H58.5 V22" fill="none" stroke="#5B7DD2" stroke-width="1"/></svg>
<div class="a" style="left:81.3px;top:338.84px;font-size:12px;line-height:14px;color:#fff;letter-spacing:0px;font-weight:bold;">Labor</div>
<div class="a" style="left:77px;top:356px;width:57px;height:2px;background:#C9DCF2;"></div>
<div class="a" style="left:13px;top:363px;width:15px;height:20px;background:#C44D2C;border:1px solid #FF6B3A;border-left-color:#8C3C22;box-shadow:inset 1px 0 0 #FF6B3A,inset -1px -1px 0 #8C3C22;"></div>
<div class="a" style="left:13px;top:366.84px;font-size:12px;line-height:14px;color:#fff;letter-spacing:0px;width:15px;text-align:center;">T</div>
<div class="a" style="left:28px;top:363px;width:15px;height:20px;background:#C44D2C;border:1px solid #FF6B3A;border-left-color:#8C3C22;box-shadow:inset 1px 0 0 #FF6B3A,inset -1px -1px 0 #8C3C22;"></div>
<div class="a" style="left:28px;top:366.84px;font-size:12px;line-height:14px;color:#fff;letter-spacing:0px;width:15px;text-align:center;">C</div>
<div class="a" style="left:43px;top:363px;width:15px;height:20px;background:#C44D2C;border:1px solid #FF6B3A;border-left-color:#8C3C22;box-shadow:inset 1px 0 0 #FF6B3A,inset -1px -1px 0 #8C3C22;"></div>
<div class="a" style="left:43px;top:366.84px;font-size:12px;line-height:14px;color:#fff;letter-spacing:0px;width:15px;text-align:center;">L</div>
<div class="a" style="left:58px;top:363px;width:60px;height:20px;background:#C44D2C;border:1px solid #FF6B3A;border-left-color:#8C3C22;box-shadow:inset 1px 0 0 #FF6B3A,inset -1px -1px 0 #8C3C22;"></div>
<div class="a" style="left:58px;top:366.84px;font-size:12px;line-height:14px;color:#fff;letter-spacing:0.3px;width:60px;text-align:center;padding-left:0.3px;">Action</div>
<div class="a" style="left:118px;top:363px;width:80px;height:20px;background:#C44D2C;border:1px solid #FF6B3A;border-left-color:#8C3C22;box-shadow:inset 1px 0 0 #FF6B3A,inset -1px -1px 0 #8C3C22;"></div>
<div class="a" style="left:118px;top:366.84px;font-size:12px;line-height:14px;color:#fff;letter-spacing:0.3px;width:80px;text-align:center;padding-left:0.3px;">Labor Id</div>
<div class="a" style="left:198px;top:363px;width:260px;height:20px;background:#C44D2C;border:1px solid #FF6B3A;border-left-color:#8C3C22;box-shadow:inset 1px 0 0 #FF6B3A,inset -1px -1px 0 #8C3C22;"></div>
<div class="a" style="left:198px;top:366.84px;font-size:12px;line-height:14px;color:#fff;letter-spacing:0.3px;width:260px;text-align:center;padding-left:0.3px;">Description</div>
<div class="a" style="left:458px;top:363px;width:50px;height:20px;background:#C44D2C;border:1px solid #FF6B3A;border-left-color:#8C3C22;box-shadow:inset 1px 0 0 #FF6B3A,inset -1px -1px 0 #8C3C22;"></div>
<div class="a" style="left:458px;top:366.84px;font-size:12px;line-height:14px;color:#fff;letter-spacing:0.3px;width:50px;text-align:center;padding-left:0.3px;">Qty</div>
<div class="a" style="left:508px;top:363px;width:141px;height:20px;background:#C44D2C;border:1px solid #FF6B3A;border-left-color:#8C3C22;box-shadow:inset 1px 0 0 #FF6B3A,inset -1px -1px 0 #8C3C22;"></div>
<div class="a" style="left:508px;top:366.84px;font-size:12px;line-height:14px;color:#fff;letter-spacing:0.3px;width:141px;text-align:center;padding-left:0.3px;">Tasks</div>
<div class="a" style="left:649px;top:363px;width:80px;height:20px;background:#C44D2C;border:1px solid #FF6B3A;border-left-color:#8C3C22;box-shadow:inset 1px 0 0 #FF6B3A,inset -1px -1px 0 #8C3C22;"></div>
<div class="a" style="left:649px;top:366.84px;font-size:12px;line-height:14px;color:#fff;letter-spacing:0.3px;width:80px;text-align:center;padding-left:0.3px;">Regular Rate</div>
<div class="a" style="left:729px;top:363px;width:60px;height:20px;background:#C44D2C;border:1px solid #FF6B3A;border-left-color:#8C3C22;box-shadow:inset 1px 0 0 #FF6B3A,inset -1px -1px 0 #8C3C22;"></div>
<div class="a" style="left:729px;top:366.84px;font-size:12px;line-height:14px;color:#fff;letter-spacing:0.3px;width:60px;text-align:center;padding-left:0.3px;">OT Rate</div>
<div class="a" style="left:789px;top:363px;width:61px;height:20px;background:#C44D2C;border:1px solid #FF6B3A;border-left-color:#8C3C22;box-shadow:inset 1px 0 0 #FF6B3A,inset -1px -1px 0 #8C3C22;"></div>
<div class="a" style="left:789px;top:366.84px;font-size:12px;line-height:14px;color:#fff;letter-spacing:0.3px;width:61px;text-align:center;padding-left:0.3px;">DT Rate</div>
<div class="a" style="left:850px;top:363px;width:59px;height:20px;background:#C44D2C;border:1px solid #FF6B3A;border-left-color:#8C3C22;box-shadow:inset 1px 0 0 #FF6B3A,inset -1px -1px 0 #8C3C22;"></div>
<div class="a" style="left:850px;top:366.84px;font-size:12px;line-height:14px;color:#fff;letter-spacing:0px;width:59px;text-align:center;">RT</div>
<div class="a" style="left:909px;top:363px;width:50px;height:20px;background:#C44D2C;border:1px solid #FF6B3A;border-left-color:#8C3C22;box-shadow:inset 1px 0 0 #FF6B3A,inset -1px -1px 0 #8C3C22;"></div>
<div class="a" style="left:909px;top:366.84px;font-size:12px;line-height:14px;color:#fff;letter-spacing:0px;width:50px;text-align:center;">OT</div>
<div class="a" style="left:959px;top:363px;width:50px;height:20px;background:#C44D2C;border:1px solid #FF6B3A;border-left-color:#8C3C22;box-shadow:inset 1px 0 0 #FF6B3A,inset -1px -1px 0 #8C3C22;"></div>
<div class="a" style="left:959px;top:366.84px;font-size:12px;line-height:14px;color:#fff;letter-spacing:0px;width:50px;text-align:center;">DT</div>
<div class="a" style="left:1009px;top:363px;width:61px;height:20px;background:#C44D2C;border:1px solid #FF6B3A;border-left-color:#8C3C22;box-shadow:inset 1px 0 0 #FF6B3A,inset -1px -1px 0 #8C3C22;"></div>
<div class="a" style="left:1009px;top:366.84px;font-size:12px;line-height:14px;color:#fff;letter-spacing:0.3px;width:61px;text-align:center;padding-left:0.3px;">Discount</div>
<div class="a" style="left:13px;top:647px;width:1057px;height:18px;background:#EEEEEE;border-top:1px solid #73879F;border-bottom:1px solid #73879F;box-shadow:inset 0 1px 0 #C9DCF2,inset 0 -1px 0 #B4CBEA,inset 0 -2px 0 #73879F;"></div>
<div class="a" style="left:14px;top:648px;width:14px;height:15px;background:#EEEEEE;border-left:1px solid #fff;border-top:1px solid #fff;border-bottom:1px solid #7F93AE;"></div>
<svg class="a" style="left:18px;top:652px" width="5" height="8" viewBox="0 0 5 8"><path d="M4.6 0 V8 L0.2 4 Z" fill="#2e2e2e"/></svg>
<div class="a" style="left:1054px;top:648px;width:16px;height:15px;background:#EEEEEE;border-left:1px solid #fff;border-top:1px solid #fff;border-bottom:1px solid #7F93AE;"></div>
<svg class="a" style="left:1058px;top:652px" width="5" height="8" viewBox="0 0 5 8"><path d="M1.2 0 V8 L5.6 4 Z" fill="#2e2e2e"/></svg>
<div class="a" style="left:1053px;top:648px;width:1px;height:15px;background:#A9B4C4;"></div>
<div class="a" style="left:28px;top:647px;width:692px;height:16px;background:linear-gradient(#E6935C 0,#F0C3A0 12%,#ECB58C 50%,#E8A06C 100%);border:1px solid #FFC20E;"></div>
<div class="a" style="left:372px;top:651px;width:1px;height:9px;background:#8B7B8E;"></div>
<div class="a" style="left:373px;top:651.8px;width:1px;height:9px;background:#F6D9C2;"></div>
<div class="a" style="left:374.6px;top:651px;width:1px;height:9px;background:#8B7B8E;"></div>
<div class="a" style="left:375.6px;top:651.8px;width:1px;height:9px;background:#F6D9C2;"></div>
<div class="a" style="left:377px;top:651px;width:1px;height:9px;background:#8B7B8E;"></div>
<div class="a" style="left:378px;top:651.8px;width:1px;height:9px;background:#F6D9C2;"></div>
<div class="a" style="left:70.3px;top:677.65px;font-size:14px;line-height:17px;color:#222;letter-spacing:0.2px;font-weight:bold;">Items</div>
<div class="a" style="left:120px;top:673px;width:100px;height:24px;background:#EEEEEE;border:1px solid #7b7b7b;"></div>
<div class="a" style="left:234.8px;top:677.65px;font-size:14px;line-height:17px;color:#222;letter-spacing:0.2px;font-weight:bold;">Labor</div>
<div class="a" style="left:287px;top:673px;width:100px;height:24px;background:#EEEEEE;border:1px solid #7b7b7b;"></div>
<div class="a" style="left:446px;top:677.65px;font-size:14px;line-height:17px;color:#222;letter-spacing:0.15px;font-weight:bold;">Sub Total</div>
<div class="a" style="left:525px;top:673px;width:100px;height:24px;background:#EEEEEE;border:1px solid #7b7b7b;"></div>
<div class="a" style="left:636.3px;top:677.65px;font-size:14px;line-height:17px;color:#222;letter-spacing:0px;font-weight:bold;">Tax</div>
<div class="a" style="left:670px;top:673px;width:100px;height:24px;background:#EEEEEE;border:1px solid #7b7b7b;"></div>
<div class="a" style="left:813.5px;top:673px;width:88px;height:23px;background:#fff;border:1px solid #C4C4C4;"></div>
<div class="a" style="left:813.5px;top:677.65px;font-size:14px;line-height:17px;color:#000;letter-spacing:0px;font-weight:bold;width:88px;text-align:center;">Total</div>
<div class="a" style="left:906.5px;top:673px;width:99.5px;height:24px;background:#EEEEEE;border:1px solid #7b7b7b;"></div>
<div class="a" style="left:907.5px;top:676.65px;font-size:14px;line-height:17px;color:#222;letter-spacing:0px;font-weight:bold;">0.00</div>
<div class="a" style="left:9px;top:707.5px;width:1067.5px;height:24px;background:#fff;border:1px solid #c8c8c8;border-top:2px solid #8a8a8a;border-left:1px solid #9a9a9a;"></div>
</body></html>
